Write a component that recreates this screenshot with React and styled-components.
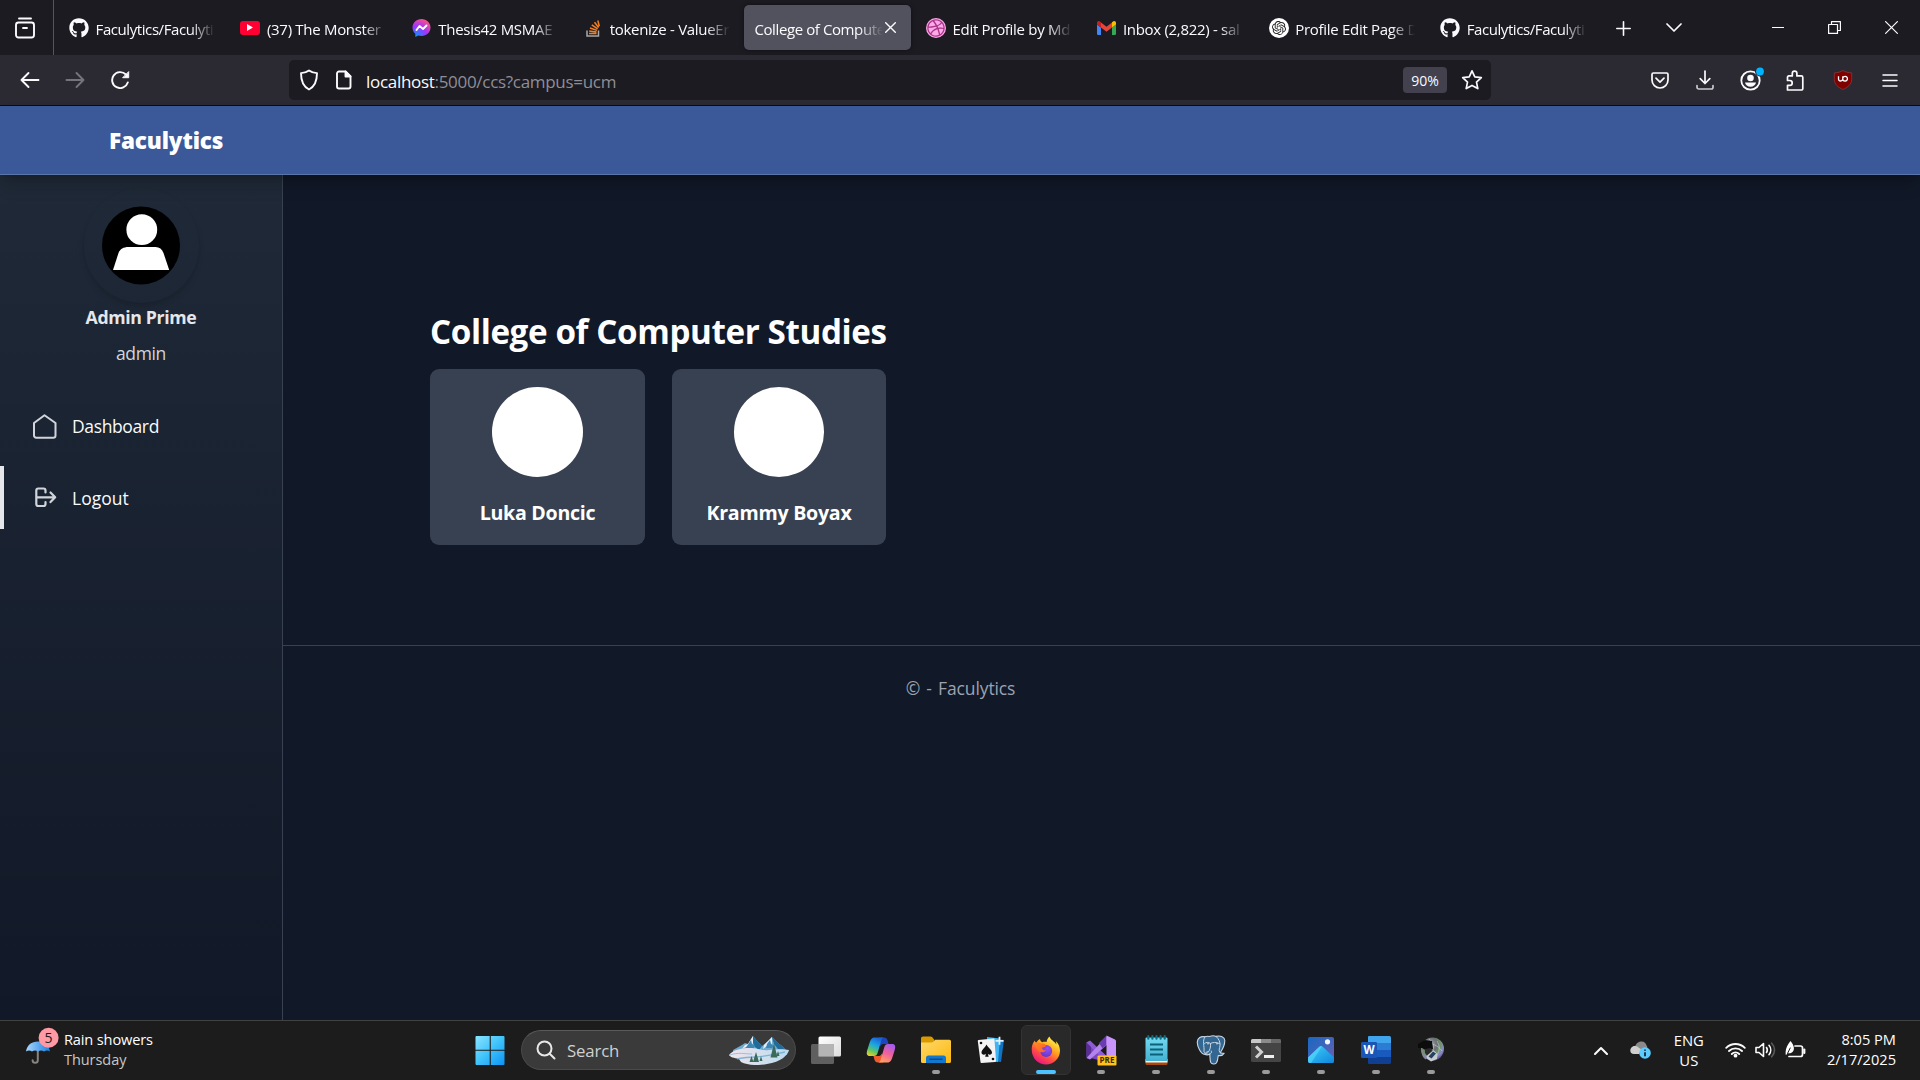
import React from "react";
import styled, { createGlobalStyle, css } from "styled-components";
import { FaGithub, FaDribbble } from "react-icons/fa";
import { SiOpenai } from "react-icons/si";

const Global = createGlobalStyle`
  *, *::before, *::after { box-sizing: border-box; }
  html, body { margin: 0; background: #111827; overflow: hidden; }
  body { font-family: "Open Sans", "Noto Sans", sans-serif; color: #fff; }
  svg { display: block; flex: none; }
`;

const Screen = styled.div`
  width: 1920px;
  height: 1080px;
  display: flex;
  flex-direction: column;
  overflow: hidden;
`;

const Label = styled.span`
  font-size: ${(p) => p.$size}px;
  line-height: ${(p) => p.$line || 20}px;
  font-weight: ${(p) => p.$weight || 400};
  letter-spacing: ${(p) => p.$ls || 0}px;
  word-spacing: ${(p) => p.$ws || 0}px;
  color: ${(p) => p.$color || "inherit"};
  white-space: nowrap;
`;

/* ---------- browser chrome ---------- */
const TabStrip = styled.div`
  height: 55px;
  flex: none;
  display: flex;
  background: #1c1b22;
  color: #fbfbfe;
`;
const ViewButton = styled.div`
  width: 54px;
  padding-left: 15px;
  border-right: 1px solid #56555e;
  display: flex;
  align-items: center;
`;
const Tabs = styled.div`
  display: flex;
  gap: 4.4px;
  padding: 5px 0 5px 4.4px;
`;
const Tab = styled.div`
  width: 167px;
  height: 45px;
  padding: 0 10px 0 10.5px;
  border-radius: 5px;
  display: flex;
  align-items: center;
  gap: 6.7px;
  ${(p) => p.$active && css`
    background: #52525e;
    box-shadow: 0 0 4px rgba(0, 0, 0, 0.5);
    gap: 2px;
    padding-right: 15px;
  `}
`;
const TabTitle = styled.div`
  flex: 1;
  min-width: 0;
  overflow: hidden;
  height: 24px;
  padding-top: 2px;
  display: flex;
  mask-image: linear-gradient(to left, transparent 0, #000 24px);
`;
const StripButton = styled.div`
  width: ${(p) => p.$w}px;
  height: 55px;
  padding-top: ${(p) => p.$top || 0}px;
  display: flex;
  align-items: center;
  justify-content: center;
`;
const Grow = styled.div`
  flex: 1;
`;

const NavBar = styled.div`
  height: 51px;
  flex: none;
  display: flex;
  align-items: center;
  background: #2b2a33;
  border-bottom: 1px solid #0c0c0d;
  color: #fbfbfe;
`;
const NavButtons = styled.div`
  width: 289px;
  display: flex;
  gap: 25px;
  padding-left: 20px;
`;
const UrlBar = styled.div`
  width: 1202px;
  height: 40px;
  border-radius: 5px;
  background: #1c1b22;
  display: flex;
  align-items: center;
  padding: 0 8px 0 10px;
`;
const SiteIcons = styled.div`
  display: flex;
  align-items: center;
  gap: 16px;
`;
const UrlText = styled.div`
  flex: 1;
  padding: 3px 0 0 13px;
  display: flex;
`;
const Zoom = styled.div`
  width: 44px;
  height: 26px;
  border-radius: 4px;
  background: #42414d;
  display: flex;
  align-items: center;
  justify-content: center;
  padding-top: 1px;
  margin-right: 14px;
`;
const Tools = styled.div`
  flex: 1;
  display: flex;
  align-items: center;
  justify-content: flex-end;
  padding-right: 7px;
`;
const Tool = styled.div`
  width: ${(p) => p.$w}px;
  display: flex;
  justify-content: center;
`;

/* ---------- page ---------- */
const Header = styled.header`
  height: 69px;
  flex: none;
  padding: 2px 109px 0;
  display: flex;
  align-items: center;
  background: #3b5998;
  border-bottom: 1px solid #5b74a9;
  box-shadow: 0 11px 17px -3px rgba(0, 0, 0, 0.2), 0 4px 7px -4px rgba(0, 0, 0, 0.2);
  z-index: 2;
`;
const Body = styled.div`
  flex: 1;
  min-height: 0;
  display: flex;
  background: #111827;
`;
const Sidebar = styled.aside`
  width: 283px;
  border-right: 1px solid #374151;
  background: linear-gradient(to bottom, #1f2937, #111827);
  display: flex;
  flex-direction: column;
`;
const Profile = styled.div`
  display: flex;
  flex-direction: column;
  align-items: center;
  padding-top: 13px;
  height: 219px;
`;
const Avatar = styled.div`
  width: 115px;
  height: 115px;
  padding: 18px;
  border-radius: 50%;
  box-shadow: 0 4px 7px -1px rgba(0, 0, 0, 0.1), 0 2px 4px -2px rgba(0, 0, 0, 0.1);
  margin-bottom: 1px;
`;
const Menu = styled.nav`
  display: flex;
  flex-direction: column;
  gap: 9px;
`;
const MenuItem = styled.a`
  height: 63px;
  border-left: 4px solid ${(p) => (p.$active ? "#e5e7eb" : "transparent")};
  padding-left: 27px;
  display: flex;
  align-items: center;
  gap: 14px;
  color: #f9fafb;
`;
const MenuText = styled.div`
  padding-top: 2px;
  display: flex;
`;
const Content = styled.main`
  flex: 1;
  display: flex;
  flex-direction: column;
`;
const College = styled.section`
  height: 470px;
  flex: none;
  padding: 132px 147px 0;
  display: flex;
  flex-direction: column;
  align-items: flex-start;
  gap: 12px;
`;
const Cards = styled.div`
  display: flex;
  gap: 27px;
`;
const Card = styled.div`
  width: ${(p) => p.$w}px;
  height: 176px;
  border-radius: 9px;
  background: #374151;
  padding-top: 18px;
  display: flex;
  flex-direction: column;
  align-items: center;
  gap: 22px;
`;
const Photo = styled.div`
  width: 90.5px;
  height: 90px;
  border-radius: 50%;
  background: #fff;
`;
const Footer = styled.footer`
  border-top: 1px solid #374151;
  padding: 29px 282px 0 0;
  display: flex;
  justify-content: center;
`;

/* ---------- taskbar ---------- */
const Taskbar = styled.div`
  height: 60px;
  flex: none;
  display: flex;
  background: #1c1c1c;
  border-top: 1px solid #414141;
`;
const Weather = styled.div`
  width: 462px;
  padding: 6px 0 0 25px;
  display: flex;
  gap: 5px;
`;
const Lines = styled.div`
  display: flex;
  flex-direction: column;
  align-items: ${(p) => p.$align || "flex-start"};
  padding-top: ${(p) => p.$top || 0}px;
  margin-left: ${(p) => p.$gap || 0}px;
`;
const Apps = styled.div`
  display: flex;
`;
const AppCell = styled.div`
  width: 55px;
  height: 58px;
  display: flex;
  flex-direction: column;
  align-items: center;
  padding-top: 4px;
`;
const Tile = styled.div`
  width: 50px;
  height: 50px;
  border-radius: 6px;
  border: 1px solid ${(p) => (p.$active ? "#333" : "transparent")};
  background: ${(p) => (p.$active ? "#292929" : "transparent")};
  display: flex;
  flex-direction: column;
  align-items: center;
  justify-content: flex-end;
  gap: 5px;
`;
const ArtBox = styled.div`
  height: 30px;
  display: flex;
  align-items: center;
`;
const Dot = styled.div`
  width: ${(p) => (p.$active ? 20 : 8)}px;
  height: 4px;
  border-radius: 2px;
  background: ${(p) => (p.$active ? "#4cc2ff" : p.$on ? "#9a9a9a" : "transparent")};
`;
const Search = styled.div`
  width: 275px;
  height: 40px;
  margin: 9px 2.5px 0 4px;
  border-radius: 20px;
  border: 1px solid #4a4a4a;
  border-top-color: #5a5a5a;
  background: #3a3a3a;
  padding: 0 6px 0 14px;
  display: flex;
  align-items: center;
  gap: 11px;
`;
const SearchText = styled.div`
  padding-top: 2px;
  display: flex;
`;
const Tray = styled.div`
  flex: 1;
  display: flex;
  justify-content: flex-end;
  padding-right: 24px;
`;
const TrayIcon = styled.div`
  height: 58px;
  width: ${(p) => p.$w}px;
  display: flex;
  align-items: center;
  justify-content: center;
`;

const S = ({ w, h, sw = 1.6, c = "#fbfbfe", children }) => (
  <svg width={w} height={h} viewBox={`0 0 ${w} ${h}`} fill="none" stroke={c} strokeWidth={sw} strokeLinecap="round" strokeLinejoin="round">
    {children}
  </svg>
);

const Messenger = () => (
  <svg width="20" height="20" viewBox="0 0 20 20">
    <defs>
      <radialGradient id="msg" cx="0.2" cy="1" r="1.1">
        <stop offset="0" stopColor="#0099ff" />
        <stop offset="0.55" stopColor="#a033ff" />
        <stop offset="1" stopColor="#ff5280" />
      </radialGradient>
    </defs>
    <path fill="url(#msg)" d="M9.500 1C4.400 1 .5 4.700.5 9.500c0 2.600 1.100 4.800 2.800 6.300V19l2.900-1.500c1 .3 2.100.5 3.300.5 5.100 0 9-3.700 9-8.500S14.600 1 9.500 1z" />
    <path fill="none" stroke="#fff" strokeWidth="1.9" strokeLinejoin="round" strokeLinecap="round" d="M4.500 12l3-4 3.500 3 3.500-3.500" />
  </svg>
);
const Gmail = () => (
  <svg width="19" height="14" viewBox="0 0 19 14">
    <path fill="#4285f4" d="M0 3.500l4 3V14H1.300A1.300 1.300 0 010 12.700z" />
    <path fill="#34a853" d="M15 6.500l4-3v9.200a1.300 1.300 0 01-1.300 1.300H15z" />
    <path fill="#ea4335" d="M4 1.500L9.500 5.700 15 1.500v5L9.500 10.700 4 6.500z" />
    <path fill="#c5221f" d="M0 2c0-1.800 2-2.500 3.300-1.300L4 1.300v5.200l-4-3z" />
    <path fill="#fbbc04" d="M19 2c0-1.800-2-2.500-3.300-1.300l-.7.6v5.200l4-3z" />
  </svg>
);
const Round = styled.div`
  width: 20px;
  height: 20px;
  flex: none;
  border-radius: 50%;
  background: ${(p) => p.$bg};
  color: ${(p) => p.$fg};
  display: flex;
  align-items: center;
  justify-content: center;
`;
const YtBox = styled.div`
  width: 20px;
  height: 14px;
  flex: none;
  border-radius: 3px;
  background: #ff0033;
  display: flex;
  align-items: center;
  justify-content: center;
`;
const StackIcon = () => (
  <svg width="20" height="20" viewBox="0 0 20 20" fill="none">
    <path d="M4 12.500v5.500h11.500v-5.500" stroke="#a8a9ab" strokeWidth="1.500" />
    <path d="M6 15.600h7.500M6.200 13l7.300.9M7 10l7 2.400M8.800 6.800l5.800 4M11.500 4.200l4.100 5.300M14.800 2.500l1.500 5.700" stroke="#f48024" strokeWidth="1.500" />
  </svg>
);

const TABS = [
  { icon: <FaGithub size={20} />, text: "Faculytics/Faculyti", ls: -0.42 },
  { icon: <YtBox><svg width="6" height="7" viewBox="0 0 6 7"><path fill="#fff" d="M0 0l6 3.500L0 7z" /></svg></YtBox>, text: "(37) The Monster" },
  { icon: <Messenger />, text: "Thesis42 MSMAE |" },
  { icon: <StackIcon />, text: "tokenize - ValueEr" },
  { active: true, text: "College of Compute", ls: -0.4 },
  { icon: <Round $bg="#ffa8e8" $fg="#a8368a"><FaDribbble size={18} /></Round>, text: "Edit Profile by Md" },
  { icon: <Gmail />, text: "Inbox (2,822) - sal" },
  { icon: <Round $bg="#fff" $fg="#222"><SiOpenai size={14} /></Round>, text: "Profile Edit Page D" },
  { icon: <FaGithub size={20} />, text: "Faculytics/Faculyti", ls: -0.42 },
];

/* ---------- taskbar artwork ---------- */
const Umbrella = () => (
  <svg width="34" height="40" viewBox="0 0 34 40">
    <defs>
      <linearGradient id="umb" x1="0" x2="1"><stop offset="0" stopColor="#a9d8ff" /><stop offset="1" stopColor="#1a7fe0" /></linearGradient>
    </defs>
    <path d="M12.800 22v11.200a2.600 2.600 0 01-5.200 0" fill="none" stroke="#8a8480" strokeWidth="2" strokeLinecap="round" />
    <path fill="url(#umb)" d="M1 24.500C2 18 6.500 14.500 13 14.500S24 18 25 24.500c-2-1.300-4-1.300-6 0-2-1.300-4-1.300-6 0-2-1.300-4-1.300-6 0-2-1.300-4-1.300-6 0z" />
    <circle cx="23.600" cy="10.800" r="10" fill="#ff99a4" />
    <text x="23.600" y="15.800" textAnchor="middle" fontSize="14" fill="#1c1c1c" fontFamily="Open Sans, sans-serif">5</text>
  </svg>
);
const WinLogo = () => (
  <svg width="30" height="30" viewBox="0 0 30 30">
    <defs><linearGradient id="win" x1="0" y1="0" x2="1" y2="1"><stop offset="0" stopColor="#8be4ff" /><stop offset="0.5" stopColor="#3fc3fb" /><stop offset="1" stopColor="#0c93f5" /></linearGradient></defs>
    <path fill="url(#win)" d="M1.500 1h13.200v13.700H.500V2a1 1 0 011-1zM15.800 1h12.700a1 1 0 011 1v12.700H15.800zM.500 15.800h14.200V30H1.500a1 1 0 01-1-1zM15.800 15.800h13.700V29a1 1 0 01-1 1H15.800z" />
  </svg>
);
const Mountains = () => (
  <svg width="60" height="29" viewBox="0 0 60 29">
    <defs>
      <linearGradient id="sn" x1="0" x2="1"><stop offset="0" stopColor="#f3e3ea" /><stop offset="1" stopColor="#b8dcf0" /></linearGradient>
    </defs>
    <path fill="#6fa9cf" d="M4 14L13 9l3-2 3 1 5-8 5 6 4 4 5-4 5-5 6 6 4 3 5 5v4H4z" />
    <path fill="#1f6c9c" d="M24 0l5 6 4 4-3 4-4-3-2-4zM43 1l6 6 4 3 3 4-7-1-4-5z" />
    <path fill="#e9edf6" d="M24 0l-5 8-3 1-3 4 6-3 2 2 3-5zM43 1l-5 5-3 3-1 4 5-4 2 2 2-4z" />
    <path fill="#3d86b4" d="M22 4l-4 6-2 3h8l2-3-3-2zM41 4l-3 4-1 4h6l2-2-3-2z" />
    <path fill="url(#sn)" d="M0 19c4-5 12-7 20-7 10 0 12 3 20 2 8-1 15-1 20 0-1 5-8 12-22 14-10 2-20 1-26-2l-2-3C5 22 1 21 0 19z" />
    <path d="M8 23c10-3 22 0 48-7" stroke="#7fb4d6" strokeWidth="1.300" fill="none" />
    <path d="M1 19c8-3 15-1 22-1" stroke="#9cbfe0" strokeWidth="1" fill="none" />
    <path fill="#3a6a5c" d="M27 16l3 10h-6zM22.500 20l2 6h-4zM45 7.500l3.500 14h-7zM32 20l1.500 5h-3zM49 15l1.500 5h-3z" />
  </svg>
);
const TaskView = () => (
  <svg width="30" height="28" viewBox="0 0 30 28">
    <defs><linearGradient id="tv" x1="0" y1="0" x2="1" y2="1"><stop offset="0" stopColor="#fff" /><stop offset="1" stopColor="#dcdcdc" /></linearGradient></defs>
    <rect x="7.500" y=".5" width="22.500" height="20" rx="1.500" fill="url(#tv)" />
    <rect x="0" y="8" width="23" height="20" rx="1.500" fill="#6b6b6b" fillOpacity=".85" />
    <path fill="#b4b4b4" d="M7.500 8H23v12.500H7.500z" />
  </svg>
);
const Copilot = () => (
  <svg width="30" height="28" viewBox="0 0 30 28">
    <defs>
      <linearGradient id="cp1" x1="0.600" y1="0" x2="0.200" y2="1"><stop offset="0" stopColor="#1b63d8" /><stop offset=".4" stopColor="#1ea7e0" /><stop offset=".7" stopColor="#5cc46a" /><stop offset="1" stopColor="#f0d020" /></linearGradient>
      <linearGradient id="cp2" x1="0.700" y1="0" x2="0.300" y2="1"><stop offset="0" stopColor="#a35cf0" /><stop offset=".5" stopColor="#f0609c" /><stop offset="1" stopColor="#ffa060" /></linearGradient>
    </defs>
    <path fill="#1c45c0" d="M13 1.500h5c2 0 3 1 3.600 3L22.500 8H18c-2 0-3 .5-3.700 2.500L13 8z" />
    <path fill="#f05a2c" d="M17 26.500h-5c-2 0-3-1-3.600-3L7.500 20H12c2 0 3-.5 3.700-2.500L17 20z" />
    <path fill="url(#cp1)" d="M17.500 1.500H8.500C5.500 1.500 4.500 4 3.500 7L1.300 14c-1 3.500-.8 6 2.700 6H8c2 0 3-1 3.600-3L15 5.500c.6-2.500 1.200-3.700 2.500-4z" />
    <path fill="url(#cp2)" d="M12.500 26.500h9c3 0 4-2.500 5-5.500l2.200-7c1-3.500.8-6-2.700-6h-4c-2 0-3 1-3.600 3L15 22.500c-.6 2.500-1.200 3.700-2.500 4z" />
  </svg>
);
const Explorer = () => (
  <svg width="30" height="28" viewBox="0 0 30 28">
    <defs><linearGradient id="fo" x1="0" y1="0" x2="1" y2="1"><stop offset="0" stopColor="#ffd96a" /><stop offset="1" stopColor="#fbb80f" /></linearGradient></defs>
    <path fill="#d99a00" d="M0 2.500C0 1.300.8.500 2 .5h7.500c.8 0 1.300.3 1.800.8L13.500 4v5H0z" />
    <path fill="url(#fo)" d="M0 6.500h10.500c.8 0 1.300-.3 1.800-.8l2-2H28.500A1.500 1.500 0 0130 5.200v20.300a1.500 1.500 0 01-1.500 1.500h-27A1.500 1.500 0 010 25.500z" />
    <path fill="#1277cf" d="M5 22a2.500 2.500 0 012.500-2.500h15A2.500 2.500 0 0125 22v5H5z" />
    <path d="M9 23.300h12" stroke="#0b4a8a" strokeWidth="1.400" strokeLinecap="round" />
  </svg>
);
const Solitaire = () => (
  <svg width="28" height="28" viewBox="0 0 28 28">
    <path fill="#1173c4" d="M12 2l15 2-3 22-12-1z" />
    <path fill="#3fb6f0" d="M10 1l13 1.500L21 26l-9-1z" />
    <path fill="#f4f4f4" d="M1.500 4L16.500 2.500a1 1 0 011 1L19 25a1 1 0 01-1 1L4.500 27a1 1 0 01-1-1L.8 5a1 1 0 01.7-1z" />
    <path fill="#111" d="M9.500 8.500c1 3 5.500 5 5.500 8 0 2-2.500 3-4.200 1.300l.9 3h-3.500l.7-3C7 19.500 4.500 18.500 4.500 16.500c0-3 4-5 5-8z" />
    <circle cx="4" cy="7" r="1.300" fill="#111" /><circle cx="16" cy="23" r="1.300" fill="#111" />
    <path d="M22.500 .8v8M18.500 4.800h8" stroke="#dff2ff" strokeWidth="1.800" />
  </svg>
);
const Firefox = () => (
  <svg width="30" height="29" viewBox="0 0 30 29">
    <defs>
      <linearGradient id="ff1" x1=".8" y1=".1" x2=".25" y2="1"><stop offset="0" stopColor="#fff04a" /><stop offset=".35" stopColor="#ffa61f" /><stop offset=".65" stopColor="#ff4c45" /><stop offset="1" stopColor="#e8108a" /></linearGradient>
      <radialGradient id="ff2" cx=".6" cy=".3" r=".8"><stop offset="0" stopColor="#9a4ff0" /><stop offset="1" stopColor="#5a35c8" /></radialGradient>
      <linearGradient id="ff3" x1="0" y1="0" x2="1" y2="1"><stop offset="0" stopColor="#ff8a20" /><stop offset="1" stopColor="#ff5a2c" /></linearGradient>
    </defs>
    <path fill="url(#ff1)" d="M18.500.5c-1.800 1.800-2.800 3.600-2.900 5.500-1.500-.3-3-.2-4.400.2C9.700 5.300 9 4 9 3 7.300 3.900 6.200 5.200 5.500 6.600 4.600 6.500 4 5.500 3.800 4.500 1 8 .5 11 .8 15c.5 7.700 6.800 13.500 14.200 13.500S29 22.500 29 14.800c0-4-1.600-7.600-4.300-9.800.6 1.400.7 2.600.6 3.600C23.500 5 19.500 4 18.500.5z" />
    <circle cx="15.200" cy="15" r="6" fill="url(#ff2)" />
    <path fill="url(#ff3)" d="M4 7.500c2-1.500 4.500-1.200 6.500.3 1.500-.5 3 .1 3.700.8 1.200 1 .6 2-.7 2.300l-2.500.9c.3 1.800 1.800 2.800 4 2.500-2 2.500-5.500 2.700-7.500.7C6 13.500 4.500 11 4 7.500z" />
  </svg>
);
const VisualStudio = () => (
  <svg width="31" height="31" viewBox="0 0 31 31">
    <path fill="#7a45c0" d="M.5 7.500L3.500 6l19 17-4 3.500L.500 22z" />
    <path fill="#8e5bd6" d="M.5 7.500L4 5.500 20 20.500v7z" />
    <path fill="#5b2e96" d="M.5 7.500L5 12v7L.500 23z" />
    <path fill="#b384ee" d="M.5 23L20.500 1.500l2 1v6L4 24.500z" />
    <path fill="#6b3bb0" d="M13 8L20.500.5V10l-4 3.500z" />
    <path fill="#c795fb" d="M20.500.5L29 4.500c.7.400 1 .9 1 1.500V28l-9.500 2z" />
    <rect x="11.500" y="20.500" width="19" height="10" rx="1" fill="#ffc21c" />
    <text x="21" y="28.400" textAnchor="middle" fontSize="8" fontWeight="700" fill="#3a2a00" fontFamily="Open Sans, sans-serif">PRE</text>
  </svg>
);
const Notepad = () => (
  <svg width="23" height="30" viewBox="0 0 23 30">
    <defs><linearGradient id="np" x1="0" y1="0" x2="0" y2="1"><stop offset="0" stopColor="#72d8f0" /><stop offset="1" stopColor="#43b2d2" /></linearGradient></defs>
    <rect x=".5" y="24" width="22" height="6" rx="1.500" fill="#a8480c" />
    <path fill="#f5f5f5" d="M.5 24h22v3.500H.500z" />
    <path fill="url(#np)" d="M.5 3.500a1 1 0 011-1h20a1 1 0 011 1V26H.500z" />
    <path d="M3.300 1.200v2.500M7.400 1.200v2.500M11.500 1.200v2.500M15.600 1.200v2.500M19.700 1.200v2.500" stroke="#0e6d85" strokeWidth="2.200" strokeLinecap="round" />
    <path d="M5 9.500h13M5 14.500h13M5 19.500h13" stroke="#0b6178" strokeWidth="1.800" />
  </svg>
);
const Terminal = () => (
  <svg width="30" height="23" viewBox="0 0 30 23">
    <rect width="30" height="23" rx="1.500" fill="#454545" />
    <path fill="#c8c8c8" d="M1.500 0H10v4H0V1.500A1.500 1.500 0 011.500 0z" /><path fill="#8b8b8b" d="M10 0h10v4H10z" /><path fill="#686868" d="M20 0h8.500A1.500 1.500 0 0130 1.500V4H20z" />
    <path d="M5 7.500l5.500 5.500L5 18.500" stroke="#d0d0d0" strokeWidth="3" fill="none" />
    <path d="M13 17.500h10" stroke="#f0f0f0" strokeWidth="3" />
  </svg>
);
const Photos = () => (
  <svg width="26" height="26" viewBox="0 0 26 26">
    <defs>
      <linearGradient id="ph" x1="0" y1="0" x2="1" y2="1"><stop offset="0" stopColor="#1768c2" /><stop offset=".6" stopColor="#4a63b8" /><stop offset="1" stopColor="#7b59b0" /></linearGradient>
      <linearGradient id="ph2" x1="0" y1="0" x2="1" y2="1"><stop offset="0" stopColor="#3fd0fb" /><stop offset="1" stopColor="#0f86dc" /></linearGradient>
    </defs>
    <rect width="26" height="26" rx="2" fill="url(#ph)" />
    <path fill="url(#ph2)" d="M0 20.500L11 10c1.200-1.200 2.800-1.200 4 0l11 10.500V24a2 2 0 01-2 2H2a2 2 0 01-2-2z" />
    <path fill="#5ce0ff" fillOpacity=".55" d="M0 20.500L11 10c1-1 2-1 3-.4L3 26H2a2 2 0 01-2-2z" />
    <circle cx="19.500" cy="4.800" r="2.600" fill="#f2f6ff" />
  </svg>
);
const Word = () => (
  <svg width="30" height="28" viewBox="0 0 30 28">
    <path fill="#41a5ee" d="M8 0h20.500A1.500 1.500 0 0130 1.500V7H7V1a1 1 0 011-1z" /><path fill="#2b7cd3" d="M7 7h23v7H7z" /><path fill="#185abd" d="M7 14h23v7H7z" /><path fill="#103f91" d="M7 21h23v5.500a1.500 1.500 0 01-1.500 1.500H8a1 1 0 01-1-1z" />
    <rect x="0" y="6" width="16" height="16" rx="1.300" fill="#1a56b8" />
    <text x="8" y="18" textAnchor="middle" fontSize="11.500" fontWeight="700" fill="#fff" fontFamily="Open Sans, sans-serif">W</text>
  </svg>
);
const Globe = () => (
  <svg width="28" height="28" viewBox="0 0 28 28">
    <defs><radialGradient id="gl" cx=".4" cy=".3" r=".75"><stop offset="0" stopColor="#a9b0b4" /><stop offset=".4" stopColor="#6a6f74" /><stop offset=".6" stopColor="#6f9468" /><stop offset=".8" stopColor="#8a88cc" /><stop offset="1" stopColor="#4a4a78" /></radialGradient></defs>
    <circle cx="15.500" cy="13" r="11.500" fill="url(#gl)" />
    <path d="M12 3c4 3 5 7 4 11M20 5c3 5 3 9 0 14M9 6c6 2 12 3 16 9" stroke="#e4e4f4" strokeOpacity=".45" fill="none" />
    <path fill="#0c0c0c" d="M1 8l7-4 7 1 1 8-6 2-5-3-4 0z" />
    <path fill="#2a2a2a" d="M8 13l6-1 2 6-5 3-3-4z" />
    <path fill="#c9ccd0" d="M9.500 20l7-6 4 4-.5 5-6 2.500-4-3z" /><path fill="#24435e" d="M11.500 20.500l4.500-5 3 2-4.500 5z" />
    <path d="M5 14c0 4 1 7 4 9" stroke="#8a8a8a" fill="none" strokeWidth="1.300" />
  </svg>
);
const Elephant = () => (
  <svg width="30" height="30" viewBox="0 0 30 30" strokeLinejoin="round" strokeLinecap="round">
    <path fill="#336791" stroke="#c9d6e2" strokeWidth="1.100" d="M1.300 7C1.500 2.500 5 1 9 1.800c1.300-.6 3-.8 4.300-.3C16 .6 18.500.6 20 1.400 24.500.2 28.700 2 28.800 5.500c.1 3.500-2.300 9-4.600 12.300 1 .5 2.500.6 4 .4-1 1.800-3.700 2.700-6 2.300-.3 2.400-.3 5.400-1.800 7.300-1.500 1.600-4.500 1.500-5.600-.3-1-1.800-.7-5.500-1-8.500-1.500 1-3.500 1-5.300.3C5 19 1 11.500 1.300 7z" />
    <path fill="none" stroke="#c9d6e2" strokeWidth="1" d="M9 1.800C6 6 8.500 11 8 16c0 2 2 3.500 4 1.500 1.800-2 3-6 2.500-9C12.500 7 10 7 8.500 8.500M20 1.400c3 2.500 4.500 6 4 9.500-.3 2-1.500 4-.5 6M14.500 8.500c1.800-1.300 6-1.600 9 0M13.800 19c1.500-.5 2.200-1.500 1.500-3M8.500 19.200l3-3" />
    <circle cx="12" cy="8.800" r=".7" fill="#fff" /><circle cx="21" cy="8.800" r=".7" fill="#fff" />
  </svg>
);

const APPS = [
  { art: <TaskView /> }, { art: <Copilot /> }, { art: <Explorer />, on: true }, { art: <Solitaire /> },
  { art: <Firefox />, on: true, active: true }, { art: <VisualStudio />, on: true }, { art: <Notepad />, on: true },
  { art: <Elephant />, on: true }, { art: <Terminal />, on: true }, { art: <Photos />, on: true },
  { art: <Word />, on: true }, { art: <Globe />, on: true },
];

export default function App() {
  return (
    <Screen>
      <Global />
      <TabStrip>
        <ViewButton>
          <S w={20} h={22} sw={1.9}><path d="M4 1.500h12" /><rect x="1" y="5.500" width="18" height="15" rx="2.500" /><path d="M8 11h4" /></S>
        </ViewButton>
        <Tabs>
          {TABS.map((t, i) => (
            <Tab key={i} $active={t.active}>
              {t.icon}
              <TabTitle><Label $size={15} $line={22} $ls={t.ls || -0.3}>{t.text}</Label></TabTitle>
              {t.active && <S w={11} h={11} sw={1.4}><path d="M.7.700l9.600 9.600M10.300.7L.7 10.300" /></S>}
            </Tab>
          ))}
        </Tabs>
        <StripButton $w={53} $top={2}><S w={15} h={15} sw={1.6}><path d="M7.500.8v13.400M.8 7.500h13.400" /></S></StripButton>
        <StripButton $w={49}><S w={16} h={9} sw={1.7}><path d="M1 1l7 7 7-7" /></S></StripButton>
        <Grow />
        <StripButton $w={57}><S w={12} h={2} sw={1.2}><path d="M0 .5h12" /></S></StripButton>
        <StripButton $w={57}><S w={13} h={13} sw={1.2}><path d="M.6 3.500h8.900v8.900H.600zM3.500 3.500V.6h8.900v8.900H9.500" /></S></StripButton>
        <StripButton $w={57}><S w={13} h={13} sw={1.2}><path d="M.6.600l11.800 11.800M12.400.6L.6 12.400" /></S></StripButton>
      </TabStrip>
      <NavBar>
        <NavButtons>
          <S w={20} h={18} sw={1.9}><path d="M1.500 9h17M8.500 2l-7 7 7 7" /></S>
          <S w={20} h={18} sw={1.9} c="#75747c"><path d="M1.500 9h17M11.500 2l7 7-7 7" /></S>
          <S w={20} h={18} sw={1.9}><path d="M17.800 11.500a8 8 0 11-1.900-8" /><path d="M18.700 1v5.700H13z" fill="#fbfbfe" strokeWidth="1" /></S>
        </NavButtons>
        <UrlBar>
          <SiteIcons>
            <S w={20} h={22} sw={1.9}><path d="M10 1.500c2.200 1.600 4.800 2.500 8 2.600 0 8-2 13.500-8 16.400C4 17.600 2 12.100 2 4.100c3.200-.1 5.800-1 8-2.600z" /></S>
            <S w={18} h={20} sw={1.9}><path d="M4 1.500h6.500L15.500 6.500v10a2 2 0 01-2 2H4a2 2 0 01-2-2v-13a2 2 0 012-2z" /><path d="M10.500 1.500v5h5z" fill="#fbfbfe" /></S>
          </SiteIcons>
          <UrlText><Label $size={17} $line={24} $ls={-0.3}>localhost<Label $size={17} $line={24} $ls={-0.3} $color="#8f8e96">:5000/ccs?campus=ucm</Label></Label></UrlText>
          <Zoom><Label $size={14} $ls={-0.1}>90%</Label></Zoom>
          <S w={22} h={22} sw={1.7}><path d="M11 1.800l2.800 6 6.500.8-4.800 4.500 1.300 6.500L11 16.400l-5.800 3.200 1.300-6.500L1.700 8.600l6.500-.8z" /></S>
        </UrlBar>
        <Tools>
          <Tool $w={40}><S w={18} h={17} sw={1.7}><path d="M2.400 1h13.200A1.400 1.400 0 0117 2.400V8a8 8 0 01-16 0V2.400A1.400 1.400 0 012.400 1z" /><path d="M5 6.200l4 3.900 4-3.900" /></S></Tool>
          <Tool $w={49}><S w={18} h={20} sw={1.7}><path d="M9 1v12.500M4.200 8.700L9 13.500l4.800-4.800" /><path stroke="#c9c9ce" d="M1 15.500v1.800A1.700 1.700 0 002.700 19h12.600a1.700 1.700 0 001.700-1.700v-1.800" /></S></Tool>
          <Tool $w={42}>
            <S w={27} h={26} sw={1.8}>
              <circle cx="13.500" cy="13.500" r="9.200" />
              <circle cx="13.500" cy="11" r="3.300" fill="#fbfbfe" stroke="none" />
              <path d="M8 15.500h11c-.4 2.500-2.700 4.200-5.500 4.200S8.400 18 8 15.500z" fill="#fbfbfe" stroke="none" />
              <circle cx="23" cy="4.500" r="5" fill="#2b2a33" stroke="none" />
              <circle cx="23" cy="4.500" r="3.900" fill="#00b3ff" stroke="none" />
            </S>
          </Tool>
          <Tool $w={48}><S w={18} h={21} sw={1.7}><path d="M1.500 20v-4.700H3.800a2.400 2.400 0 000-4.800H1.500V7.200A1.300 1.300 0 012.800 5.900H6.300V3.500a2.300 2.300 0 014.600 0v2.400h4.400A1.500 1.500 0 0116.800 7.400v11.100A1.500 1.500 0 0115.300 20z" /></S></Tool>
          <Tool $w={48}>
            <svg width="20" height="20" viewBox="0 0 20 20">
              <path fill="#800000" stroke="#a04040" strokeWidth=".6" d="M10 .5c2.500 1.500 5 2.200 8.700 2.400v6.600c0 4.500-3.700 7.700-8.700 10-5-2.300-8.700-5.500-8.700-10V2.900C5 2.700 7.500 2 10 .5z" />
              <path d="M5.500 6.200v2.900a1.900 1.900 0 002 1.900 2.300 2.300 0 002.300-1.900V6.200M9.800 9.100a2.200 2 0 004.600-.3c0-1.600-1-2.400-2.300-2.400s-1.700.6-2.300 1.500" fill="none" stroke="#fff" strokeWidth="1.300" />
            </svg>
          </Tool>
          <Tool $w={46}><S w={16} h={13} sw={1.5}><path d="M1 1h14M1 6.500h14M1 12h14" /></S></Tool>
        </Tools>
      </NavBar>
      <Header><Label $size={22.5} $line={32} $weight={800} $ls={-0.15}>Faculytics</Label></Header>
      <Body>
        <Sidebar>
          <Profile>
            <Avatar>
              <svg width="79" height="79" viewBox="0 0 79 79"><circle cx="39" cy="39.500" r="39" /><circle cx="39.800" cy="23.700" r="15.400" fill="#fff" /><path fill="#fff" d="M26.500 41h27c4 0 6.500 2 8 6l5.700 17H11l5.500-17c1.500-4 5-6 10-6z" /></svg>
            </Avatar>
            <Label $size={17.7} $line={27} $weight={700} $ls={-0.35} $color="#e5e7eb">Admin Prime</Label>
            <Label $size={17.5} $line={45} $ls={-0.35} $color="#d1d5db">admin</Label>
          </Profile>
          <Menu>
            <MenuItem>
              <S w={27} h={28} sw={2} c="#d1d5db"><path d="M13.500 3.300L24.500 11v12.500a2.200 2.200 0 01-2.200 2.200H5.200A2.200 2.200 0 013 23.500V11z" /></S>
              <MenuText><Label $size={17.5} $line={27} $ls={-0.37}>Dashboard</Label></MenuText>
            </MenuItem>
            <MenuItem $active>
              <S w={27} h={27} sw={2.2} c="#d1d5db"><path d="M14.500 8.500V6.500a2 2 0 00-2-2H7.300a2 2 0 00-2 2v13.500a2 2 0 002 2h5.200a2 2 0 002-2v-2M5.500 13.300h18.500M19.500 8.500l4.700 4.800-4.700 4.800" /></S>
              <MenuText><Label $size={17.5} $line={27}>Logout</Label></MenuText>
            </MenuItem>
          </Menu>
        </Sidebar>
        <Content>
          <College>
            <Label $size={33.2} $line={50} $weight={700} $ls={-0.39}>College of Computer Studies</Label>
            <Cards>
              <Card $w={215}><Photo /><Label $size={19.6} $line={28} $weight={700} $ls={-0.28}>Luka Doncic</Label></Card>
              <Card $w={214}><Photo /><Label $size={19.6} $line={28} $weight={700} $ls={-0.25}>Krammy Boyax</Label></Card>
            </Cards>
          </College>
          <Footer><Label $size={17.5} $line={27} $ls={-0.12} $ws={1.8} $color="#9ca3af">© - Faculytics</Label></Footer>
        </Content>
      </Body>
      <Taskbar>
        <Weather>
          <Umbrella />
          <Lines $top={2}><Label $size={14.6} $ls={-0.15}>Rain showers</Label><Label $size={14.5} $line={22} $ls={-0.05} $color="#c8c8c8">Thursday</Label></Lines>
        </Weather>
        <Apps>
          <AppCell><Tile><ArtBox><WinLogo /></ArtBox><Dot /></Tile></AppCell>
          <Search>
            <S w={20} h={20} sw={2} c="#e8e8e8"><circle cx="8.500" cy="8.500" r="7" /><path d="M13.700 13.700l4.800 4.800" /></S>
            <SearchText><Label $size={16.8} $line={22} $ls={-0.15} $color="#d0d0d0">Search</Label></SearchText>
            <Grow />
            <Mountains />
          </Search>
          {APPS.map((a, i) => (
            <AppCell key={i}><Tile $active={a.active}><ArtBox>{a.art}</ArtBox><Dot $on={a.on} $active={a.active} /></Tile></AppCell>
          ))}
        </Apps>
        <Tray>
          <TrayIcon $w={36}><S w={14} h={9} sw={2}><path d="M1 8l6-6 6 6" /></S></TrayIcon>
          <TrayIcon $w={44}>
            <svg width="21" height="18" viewBox="0 0 21 18">
              <path fill="#8a8a8a" d="M5 6C6 2 9 .5 11.500.5c3 0 4.500 2 5 4 1 .5 1 4 .5 5H7z" />
              <path fill="#cfcfcf" d="M4.500 5c2 0 3 .5 4 1.500L12 9l-3 4H4C1.500 13 .3 11.500.3 9.500S2 5 4.500 5z" />
              <circle cx="15" cy="12" r="5.800" fill="#5ccbff" />
              <path d="M15 11.200v4M15 8.500v1.300" stroke="#12202a" strokeWidth="1.700" />
            </svg>
          </TrayIcon>
          <Lines $align="center" $top={9} $gap={11}><Label $size={14.8}>ENG</Label><Label $size={14.8}>US</Label></Lines>
          <Lines $gap={17} />
          <TrayIcon $w={30}>
            <S w={21} h={16} sw={1.8}><path d="M1.200 5.800a13.300 13.300 0 0118.600 0M4 9a9.200 9.200 0 0113 0M6.800 12a5.300 5.300 0 017.400 0" /><circle cx="10.500" cy="13.700" r="1.900" fill="#fff" stroke="none" /></S>
          </TrayIcon>
          <TrayIcon $w={30}>
            <S w={21} h={16} sw={1.6}><path d="M1 5.500h3L8.500 1.500v13L4 10.500H1z" /><path d="M11.500 5.500c1 1.500 1 3.500 0 5M14 3.300c2.300 2.700 2.300 6.700 0 9.400" /><path d="M16.700 1.200c3.800 4 3.800 9.600 0 13.600" stroke="#5a5a5a" /></S>
          </TrayIcon>
          <TrayIcon $w={30}>
            <S w={21} h={20} sw={1.7}><path d="M10 6h5.500a2 2 0 012 2v6.500a2 2 0 01-2 2H4" /><path d="M19.300 9.500v3.500" strokeWidth="2.200" /><path d="M.8 15C-.2 9 2.500 5 5.500 1c2.500 3 4.500 6.500 2.800 10-1.200 2-3 2.500-5 2.300z" fill="#fff" stroke="none" /><path d="M2.500 13.500l2.700-5.500" stroke="#1c1c1c" strokeWidth="1" /></S>
          </TrayIcon>
          <Lines $align="flex-end" $top={8} $gap={16}><Label $size={14.6}>8:05 PM</Label><Label $size={14.6}>2/17/2025</Label></Lines>
        </Tray>
      </Taskbar>
    </Screen>
  );
}
